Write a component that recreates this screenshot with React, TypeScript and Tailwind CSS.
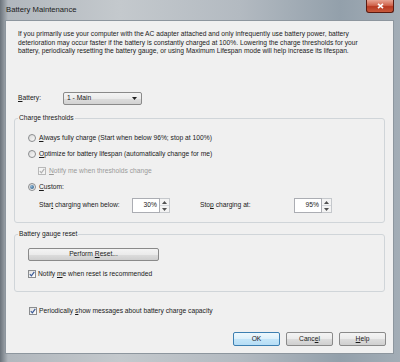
import React from 'react';

const U: React.FC<{ children: React.ReactNode }> = ({ children }) => (
  <span className="underline decoration-[0.5px] underline-offset-[1px]">{children}</span>
);

const Radio: React.FC<{ checked?: boolean }> = ({ checked }) => (
  <span className="w-[8px] h-[8px] shrink-0 rounded-full border border-[#8a8c8e] bg-[linear-gradient(135deg,#d9d9d9,#fafafa)] flex items-center justify-center">
    {checked && <span className="w-[4px] h-[4px] rounded-full bg-[radial-gradient(circle_at_35%_35%,#8fb8d8,#1f4f7c)]" />}
  </span>
);

const Check: React.FC<{ disabled?: boolean }> = ({ disabled }) => (
  <span
    className={`w-[8px] h-[8px] shrink-0 border flex items-center justify-center ${
      disabled ? 'border-[#b8b8b8] bg-[#f4f4f4]' : 'border-[#8a8c8e] bg-[linear-gradient(135deg,#e0e0e0,#ffffff)]'
    }`}
  >
    <svg width="6" height="6" viewBox="0 0 6 6">
      <path d="M0.8 3.2 L2.4 4.8 L5.3 0.9" fill="none" stroke={disabled ? '#b0b0b0' : '#3a5a98'} strokeWidth="1.2" />
    </svg>
  </span>
);

const Spin: React.FC<{ value: string }> = ({ value }) => (
  <div className="flex h-[15px]">
    <div className="w-[28px] h-full bg-white border border-[#abadb3] flex items-center justify-end pr-[2px]">{value}</div>
    <div className="w-[10px] h-full flex flex-col border border-l-0 border-[#c5c8cc] bg-[#f3f3f3]">
      <div className="flex-1 flex items-center justify-center border-b border-[#d5d8dc]">
        <svg width="5" height="3" viewBox="0 0 5 3"><polygon points="2.5,0 5,3 0,3" fill="#505050" /></svg>
      </div>
      <div className="flex-1 flex items-center justify-center">
        <svg width="5" height="3" viewBox="0 0 5 3"><polygon points="0,0 5,0 2.5,3" fill="#505050" /></svg>
      </div>
    </div>
  </div>
);

const Btn: React.FC<{ children: React.ReactNode; primary?: boolean; className?: string }> = ({ children, primary, className }) => (
  <div
    className={`flex items-center justify-center rounded-[2px] border ${
      primary
        ? 'border-[#3c7fb1] bg-[linear-gradient(#eef8fd,#dcf0fb_50%,#c4e5f8_51%,#b6ddf5)]'
        : 'border-[#8a8a8a] bg-[linear-gradient(#f4f4f4,#ebebeb_50%,#dddddd_51%,#cfcfcf)]'
    } ${className ?? ''}`}
  >
    <span>{children}</span>
  </div>
);

export default function App() {
  return (
    <div
      className="w-[400px] h-[362px] flex flex-col bg-[linear-gradient(90deg,#6b737b_0%,#b1b7bd_2%,#c4c9cd_30%,#b3bac1_60%,#93a0ab_85%,#a3adb6_100%)] text-[#1a1a1a] text-[6.7px]"
      style={{ fontFamily: '"Liberation Sans", Arial, sans-serif' }}
    >
      {/* title bar */}
      <div className="h-[20px] shrink-0 flex items-start justify-between pl-[6px] pr-[6px]">
        <span className="text-[7.7px] leading-[8px] mt-[6px] text-[#202020]">Battery Maintenance</span>
        <div className="w-[28px] h-[13px] rounded-b-[3px] border border-t-0 border-[#5a1a10] bg-[linear-gradient(#e8a493,#d0644c_45%,#b83a22_55%,#c85a3c)] flex items-center justify-center">
          <svg width="7" height="6" viewBox="0 0 7 6">
            <path d="M1 0.8 L6 5.2 M6 0.8 L1 5.2" stroke="#ffffff" strokeWidth="1.6" />
          </svg>
        </div>
      </div>

      {/* client area */}
      <div className="ml-[5px] mr-[6px] h-[334px] shrink-0 bg-[#f0f0f0] border border-[#8d969e] flex flex-col">
        <p className="pt-[9px] pl-[12px] leading-[8.5px]">
          If you primarily use your computer with the AC adapter attached and only infrequently use battery power, battery
          <br />
          deterioration may occur faster if the battery is constantly charged at 100%. Lowering the charge thresholds for your
          <br />
          battery, periodically resetting the battery gauge, or using Maximum Lifespan mode will help increase its lifespan.
        </p>

        <div className="mt-[36.5px] pl-[12px] flex items-center h-[13px]">
          <span className="w-[45px]">
            <U>B</U>attery:
          </span>
          <div className="w-[79px] h-[13px] rounded-[2px] border border-[#8a8a8a] bg-[linear-gradient(#f4f4f4,#ebebeb_50%,#dddddd_51%,#d2d2d2)] flex items-center justify-between pl-[3px] pr-[4px]">
            <span>1 - Main</span>
            <svg width="5" height="3" viewBox="0 0 5 3"><polygon points="0,0 5,0 2.5,3" fill="#202020" /></svg>
          </div>
        </div>

        <fieldset className="mt-[9px] ml-[8px] mr-[8px] border border-[#d0d5d9] rounded-[3px] pb-[9px]">
          <legend className="ml-[3px] px-[1px] leading-[8px]">Charge thresholds</legend>
          <div className="mt-[11px] pl-[13px] h-[10px] flex items-center gap-[3px]">
            <Radio />
            <span>
              <U>A</U>lways fully charge (Start when below 96%; stop at 100%)
            </span>
          </div>
          <div className="mt-[6px] pl-[13px] h-[10px] flex items-center gap-[3px]">
            <Radio />
            <span>
              <U>O</U>ptimize for battery lifespan (automatically change for me)
            </span>
          </div>
          <div className="mt-[7px] pl-[23px] h-[10px] flex items-center gap-[3px] text-[#9a9a9a]">
            <Check disabled />
            <span>
              <U>N</U>otify me when thresholds change
            </span>
          </div>
          <div className="mt-[6px] pl-[13px] h-[10px] flex items-center gap-[3px]">
            <Radio checked />
            <span>
              <U>C</U>ustom:
            </span>
          </div>
          <div className="mt-[6px] pl-[24px] h-[15px] flex items-center">
            <span className="w-[93px]">
              Star<U>t</U> charging when below:
            </span>
            <Spin value="30%" />
            <span className="ml-[30px] w-[94px]">
              Sto<U>p</U> charging at:
            </span>
            <Spin value="95%" />
          </div>
        </fieldset>

        <fieldset className="mt-[7px] ml-[8px] mr-[8px] border border-[#d0d5d9] rounded-[3px] pb-[12px]">
          <legend className="ml-[3px] px-[1px] leading-[8px]">Battery gauge reset</legend>
          <div className="mt-[10px] pl-[13px]">
            <Btn className="w-[131px] h-[13px]">
              Perform <U>R</U>eset...
            </Btn>
          </div>
          <div className="mt-[8px] pl-[13px] h-[10px] flex items-center gap-[2px]">
            <Check />
            <span>
              Notify <U>m</U>e when reset is recommended
            </span>
          </div>
        </fieldset>

        <div className="mt-[14px] pl-[23px] h-[10px] flex items-center gap-[2px]">
          <Check />
          <span>
            Periodically <U>s</U>how messages about battery charge capacity
          </span>
        </div>

        <div className="mt-[16px] pr-[7px] flex justify-end gap-[6px]">
          <Btn primary className="w-[47px] h-[14px]">OK</Btn>
          <Btn className="w-[47px] h-[14px]">
            Canc<U>e</U>l
          </Btn>
          <Btn className="w-[47px] h-[14px]">
            <U>H</U>elp
          </Btn>
        </div>
      </div>
    </div>
  );
}
